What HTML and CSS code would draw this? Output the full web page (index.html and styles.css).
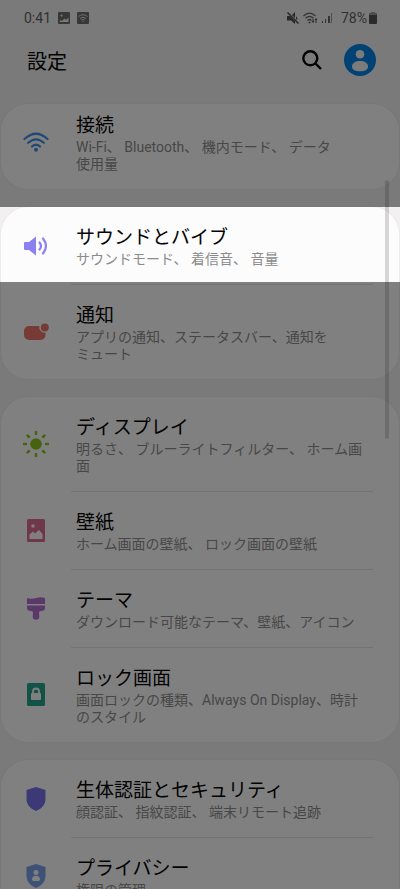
FILE: index.html
```html
<!DOCTYPE html>
<html lang="ja">
<head>
<meta charset="utf-8">
<meta name="viewport" content="width=device-width, initial-scale=1">
<title>設定</title>
<link rel="stylesheet" href="styles.css">
</head>
<body>
<div class="screen">
  <div class="status">
    <div class="notes">
      <span>0:41</span>
      <svg width="12" height="12" viewBox="0 0 12 12"><path fill="#6c6c6c" fill-rule="evenodd" d="M1 0h10a1 1 0 0 1 1 1v10a1 1 0 0 1-1 1H1a1 1 0 0 1-1-1V1a1 1 0 0 1 1-1zM1.500 10h9V5.500L8 8 6.500 6.500 4 9 2.500 8z M3.500 2.500a1 1 0 1 0 .01 0z"/></svg>
      <svg width="12" height="12" viewBox="0 0 12 12"><rect width="12" height="12" rx="1" fill="#6c6c6c"/><g fill="none" stroke="#ddd" stroke-width="1"><path d="M1.500 4.500q4.500-3.500 9 0M3 6.500q3-2.500 6 0M4.500 8q1.500-1 3 0"/></g><path fill="#ddd" d="M5 9h2L6 10z"/></svg>
    </div>
    <div class="signals">
      <svg width="12" height="12" viewBox="0 0 12 12"><path fill="#505050" d="M0 4h3l5 5v3L4 8.500H0zM5 3l3-3v6zM9 4.500q2 1 1 3.500L9 7z"/><path stroke="#505050" stroke-width="1.500" d="M.5 .5l11 11"/></svg>
      <svg width="15" height="12" viewBox="0 0 15 12"><g fill="none" stroke="#666" stroke-width="1.300"><path d="M.5 4Q6.500-1.800 12.500 4M2.500 6.300Q6.500 2.500 10.500 6.300M4.500 8.500q2-2 4 0"/></g><circle cx="6.500" cy="10.500" r="1" fill="#666"/><path fill="#505050" d="M8.500 9h1V7h1v2h1L10 11zM11.500 8L13 6l1.500 2h-1v3h-1V8z"/></svg>
      <svg width="11" height="12" viewBox="0 0 11 12"><path fill="#666" d="M0 9h1v2H0zM3 7h1v4H3zM6 4h2v7H6z"/><path fill="#999" d="M9 1h1v10H9z"/></svg>
    </div>
    <div class="battery">78%<svg width="8" height="12" viewBox="0 0 8 12"><path fill="#999" d="M2 0h4v1h2v3H0V1h2z"/><path fill="#555" d="M0 3h8v8a1 1 0 0 1-1 1H1a1 1 0 0 1-1-1z"/></svg></div>
  </div>
  <header class="header">
    <h1>設定</h1>
    <button class="search" aria-label="検索"><svg width="20" height="20" viewBox="0 0 20 20"><g fill="none" stroke="#050505" stroke-width="2.400"><circle cx="8.300" cy="8.300" r="7"/><path d="M13.300 13.300l5.700 5.700"/></g></svg></button>
    <button class="account" aria-label="アカウント"><svg width="32" height="32" viewBox="0 0 32 32"><circle cx="16" cy="16" r="16" fill="#0381e6"/><circle cx="16" cy="10.300" r="4.300" fill="#f4f2f2"/><path fill="#f4f2f2" d="M8 22.500C8 19 11.500 17 16 17s8 2 8 5.500-3.500 4.800-8 4.800-8-1.300-8-4.800z"/></svg></button>
  </header>
  <main class="list">
    <section class="card clipped">
      <a class="row" href="#"><span class="icon"><svg width="26" height="20" viewBox="0 0 26 20"><g fill="none" stroke="#3e91ea" stroke-width="2.200" stroke-linecap="round"><path d="M1.500 7Q13-3.500 24.500 7M5.200 10.800q7.800-7 15.600 0M9 14.500q4-3.500 8 0"/></g><circle cx="13" cy="17.800" r="2" fill="#3e91ea"/></svg></span><span class="text"><span class="title">接続</span><span class="sub">Wi-Fi、 Bluetooth、 機内モード、 データ<br>使用量</span></span></a>
    </section>
    <section class="card">
      <a class="row active" href="#"><span class="icon"><svg width="24" height="20" viewBox="0 0 24 20"><path fill="#8b80f0" d="M1 6h4l7-5.500v19L5 14H1a1 1 0 0 1-1-1V7a1 1 0 0 1 1-1z"/><g fill="none" stroke="#8b80f0" stroke-width="2.200" stroke-linecap="round"><path d="M15.500 6.500q3 3.500 0 7M19 2.500q6 7.500 0 15"/></g></svg></span><span class="text"><span class="title">サウンドとバイブ</span><span class="sub">サウンドモード、 着信音、 音量</span></span></a>
      <a class="row" href="#"><span class="icon"><svg width="25" height="18" viewBox="0 0 25 18"><path fill="#e87468" d="M5 3h10.200a6 6 0 0 0 6.300 6.800V12a5 5 0 0 1-5 5H5a5 5 0 0 1-5-5V8a5 5 0 0 1 5-5z"/><circle cx="20.800" cy="4.500" r="4" fill="#e87468"/></svg></span><span class="text"><span class="title">通知</span><span class="sub">アプリの通知、ステータスバー、通知を<br>ミュート</span></span></a>
    </section>
    <section class="card">
      <a class="row" href="#"><span class="icon"><svg width="26" height="26" viewBox="0 0 26 26"><circle cx="13" cy="13" r="5.800" fill="#8bc21f"/><path stroke="#8bc21f" stroke-width="2.500" d="M13 0v4M13 22v4M0 13h4M22 13h4M3.800 3.800l2.900 2.900M19.300 19.300l2.900 2.900M3.800 22.200l2.900-2.900M19.300 6.700l2.900-2.900"/></svg></span><span class="text"><span class="title">ディスプレイ</span><span class="sub">明るさ、 ブルーライトフィルター、 ホーム画<br>面</span></span></a>
      <a class="row" href="#"><span class="icon"><svg width="18" height="23" viewBox="0 0 18 23"><rect width="18" height="23" rx="1.500" fill="#dc6c94"/><circle cx="6" cy="7" r="1.800" fill="#fafafa"/><path fill="#fafafa" d="M2.500 20v-4.500L6 12.500l2 2 4-3.500 3.500 4V20z"/></svg></span><span class="text"><span class="title">壁紙</span><span class="sub">ホーム画面の壁紙、 ロック画面の壁紙</span></span></a>
      <a class="row" href="#"><span class="icon"><svg width="18" height="23" viewBox="0 0 18 23"><path fill="#b06fd0" d="M0 1q4.500 1.500 9 0t9 0v6H0zM0 8.500h18V11c0 2-1.500 3-3.500 3-2 0-2.500.8-2.500 2l.3 3.500a3.300 3.300 0 0 1-6.600 0L6 16c0-1.200-.5-2-2.500-2S0 13 0 11z"/></svg></span><span class="text"><span class="title">テーマ</span><span class="sub">ダウンロード可能なテーマ、壁紙、アイコン</span></span></a>
      <a class="row" href="#"><span class="icon"><svg width="18" height="23" viewBox="0 0 18 23"><rect width="18" height="23" rx="1.500" fill="#23a68c"/><rect x="4" y="10" width="10" height="7" rx="1" fill="#fafafa"/><path fill="none" stroke="#fafafa" stroke-width="1.800" d="M6 11V8.500a3 3 0 0 1 6 0V11"/></svg></span><span class="text"><span class="title">ロック画面</span><span class="sub">画面ロックの種類、Always On Display、時計<br>のスタイル</span></span></a>
    </section>
    <section class="card">
      <a class="row" href="#"><span class="icon"><svg width="20" height="24" viewBox="0 0 20 24"><path fill="#7670e8" d="M10 0l9.500 3v9c0 6-4 9.500-9.500 12C4.500 21.500.5 18 .5 12V3z"/></svg></span><span class="text"><span class="title">生体認証とセキュリティ</span><span class="sub">顔認証、 指紋認証、 端末リモート追跡</span></span></a>
      <a class="row" href="#"><span class="icon"><svg width="20" height="24" viewBox="0 0 20 24"><path fill="#7aa2ea" d="M10 0l9.500 3v9c0 6-4 9.500-9.500 12C4.500 21.500.5 18 .5 12V3z"/><circle cx="10" cy="8.500" r="2.500" fill="#fafafa"/><path fill="#fafafa" d="M6 15.500c0-2.500 1.500-3.700 4-3.700s4 1.200 4 3.700c0 1-1 1.500-2 1.500H8c-1 0-2-.5-2-1.500z"/></svg></span><span class="text"><span class="title">プライバシー</span><span class="sub">権限の管理</span></span></a>
    </section>
    <div class="scrollbar"></div>
  </main>
</div>
</body>
</html>
```
FILE: styles.css
```css
* {
  box-sizing: border-box;
}

body {
  margin: 0;
  background: #f2f0f0;
  color: #050505;
  font-family: Roboto, "Noto Sans CJK JP", sans-serif;
}

.screen {
  height: 100vh;
  overflow: hidden;
}

svg {
  display: block;
  flex: none;
}

.status {
  display: flex;
  align-items: center;
  gap: 8px;
  height: 36px;
  padding: 0 23px 0 24px;
  color: #606060;
  font-size: 14px;
}

.notes,
.signals,
.battery {
  display: flex;
  align-items: center;
}

.notes {
  flex: 1;
  gap: 7px;
}

.signals {
  gap: 4px;
}

.battery {
  gap: 2px;
}

.header {
  display: flex;
  align-items: center;
  height: 48px;
  padding: 0 24px 0 27px;
}

h1 {
  flex: 1;
  margin: 0;
  font-size: 20px;
  font-weight: 400;
}

button {
  padding: 0;
  border: 0;
  background: none;
}

.search {
  margin-right: 22px;
}

.list {
  position: relative;
  display: flex;
  flex-direction: column;
  gap: 18px;
  padding-top: 20px;
}

.card {
  margin: 0 1px;
  border-radius: 27px;
  background: #fdfcfc;
  box-shadow: 0 0 1px 1px #ebeaea;
}

.clipped {
  overflow: hidden;
}

.clipped .row {
  margin-top: -9px;
}

.row {
  position: relative;
  display: flex;
  align-items: center;
  padding-right: 26px;
  color: inherit;
  text-decoration: none;
}

.icon {
  display: flex;
  justify-content: center;
  width: 70px;
}

.text {
  flex: 1;
  padding: 17px 0 16px 5px;
  white-space: nowrap;
}

.row + .row .text {
  border-top: 1px solid #e2e2e3;
}

.title,
.sub {
  display: block;
}

.title {
  font-size: 19px;
  line-height: 27px;
}

.sub {
  color: #8c8c8c;
  font-size: 14px;
  line-height: 17px;
}

/* The dimming layer is the spread around the highlighted row. */
.active::after {
  content: "";
  position: absolute;
  z-index: 2;
  inset: 0 -1px 2px;
  box-shadow: 0 0 0 200vmax rgba(0, 0, 0, 0.49);
}

.scrollbar {
  position: absolute;
  z-index: 1;
  top: 96px;
  right: 11px;
  width: 4px;
  height: 259px;
  border-radius: 2px;
  background: rgba(0, 0, 0, 0.15);
}
```
